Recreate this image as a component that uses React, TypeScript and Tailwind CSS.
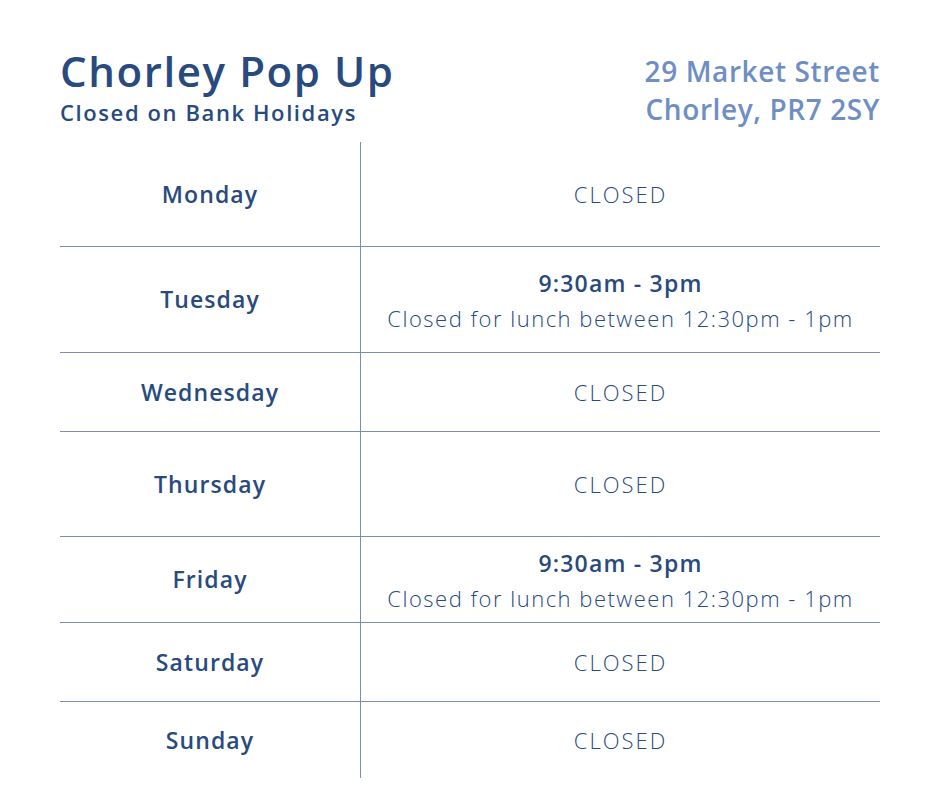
import React from 'react';

type Day = { name: string; hours?: string; note?: string; h: string };

const days: Day[] = [
  { name: 'Monday', h: 'h-[104px]' },
  { name: 'Tuesday', hours: '9:30am - 3pm', note: 'Closed for lunch between 12:30pm - 1pm', h: 'h-[106px]' },
  { name: 'Wednesday', h: 'h-[79px]' },
  { name: 'Thursday', h: 'h-[105px]' },
  { name: 'Friday', hours: '9:30am - 3pm', note: 'Closed for lunch between 12:30pm - 1pm', h: 'h-[86px]' },
  { name: 'Saturday', h: 'h-[79px]' },
  { name: 'Sunday', h: 'h-[77px]' },
];

const App: React.FC = () => {
  return (
    <div className="w-[940px] h-[788px] bg-white px-[60px] pt-[49px] font-['Open_Sans',sans-serif] text-[#284a7e]">
      {/* Header */}
      <div className="flex items-start justify-between h-[93px]">
        <div>
          <h1 className="text-[42px] leading-[44px] font-semibold tracking-[1.6px]">Chorley Pop Up</h1>
          <p className="text-[22px] leading-[26px] font-semibold tracking-[1.6px] mt-[6px]">Closed on Bank Holidays</p>
        </div>
        <div className="text-right text-[28px] leading-[38px] font-semibold tracking-[0.6px] text-[#6f8fc4] pt-[3px]">
          <div>29 Market Street</div>
          <div>Chorley, PR7 2SY</div>
        </div>
      </div>

      {/* Opening hours */}
      <div className="w-[820px]">
        {days.map((d, i) => (
          <div
            key={d.name}
            className={`flex ${d.h} ${i > 0 ? 'border-t border-[#7d8db0]' : ''}`}
          >
            <div className="w-[301px] border-r border-[#7d8db0] flex items-center justify-center text-[23px] font-semibold tracking-[1.1px]">
              {d.name}
            </div>
            <div className="flex-1 flex flex-col items-center justify-center text-[22px]">
              {d.hours ? (
                <>
                  <div className="text-[23px] font-semibold tracking-[1.2px] leading-[36px]">{d.hours}</div>
                  <div className="font-light tracking-[1.5px] leading-[34px]">{d.note}</div>
                </>
              ) : (
                <div className="font-light tracking-[2px]">CLOSED</div>
              )}
            </div>
          </div>
        ))}
      </div>
    </div>
  );
};

export default App;
